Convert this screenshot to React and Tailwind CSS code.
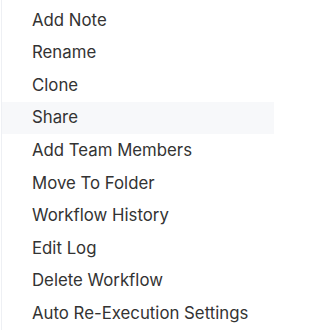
const items = [
  "Add Note",
  "Rename",
  "Clone",
  "Share",
  "Add Team Members",
  "Move To Folder",
  "Workflow History",
  "Edit Log",
  "Delete Workflow",
  "Auto Re-Execution Settings",
];

export default function App() {
  return (
    <div className="w-[274px] h-[334px] overflow-hidden bg-white">
      <div className="ml-[1px] border-l border-[#eef0f4] pt-[4px] font-['Inter',sans-serif] text-[16.8px] text-[#333333]">
        {items.map((label) => (
          <div
            key={label}
            className={
              label === "Share"
                ? "h-[32.6px] flex items-center pl-[30px] bg-[#f7f8fa]"
                : "h-[32.6px] flex items-center pl-[30px]"
            }
          >
            {label}
          </div>
        ))}
      </div>
    </div>
  );
}
